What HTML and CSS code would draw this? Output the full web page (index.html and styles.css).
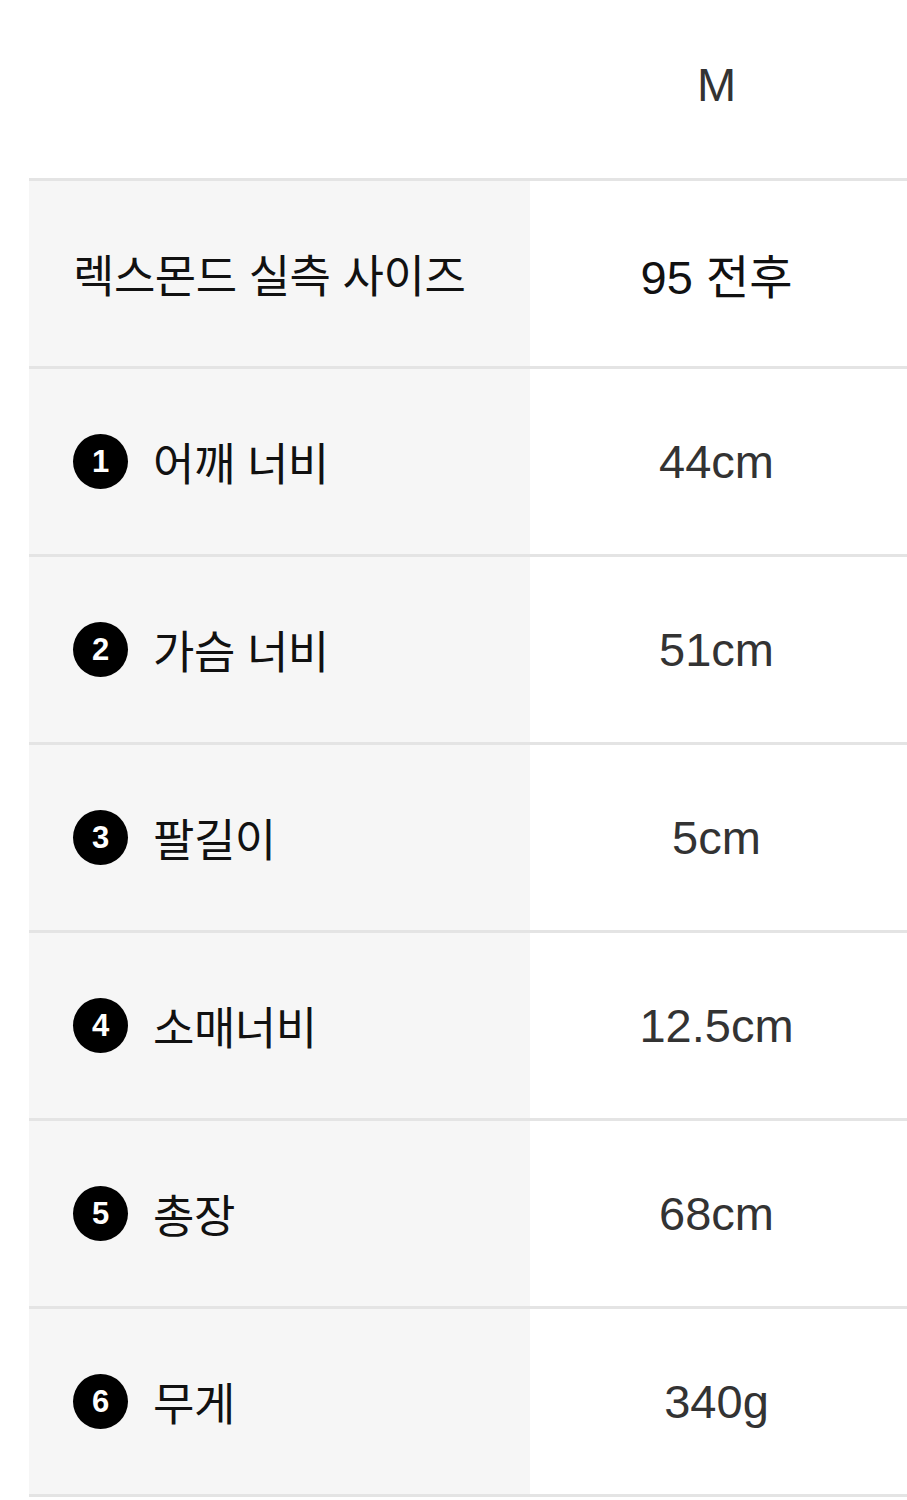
FILE: index.html
```html
<!DOCTYPE html>
<html lang="ko">
<head>
<meta charset="utf-8">
<link rel="stylesheet" href="styles.css">
</head>
<body>
<div class="size-table">
  <div class="row head">
    <div class="cell label blank"></div>
    <div class="cell value head-value">M</div>
  </div>
  <div class="row">
    <div class="cell label"><span class="txt">렉스몬드 실측 사이즈</span></div>
    <div class="cell value dark">95 전후</div>
  </div>
  <div class="row">
    <div class="cell label"><span class="num">1</span><span class="txt">어깨 너비</span></div>
    <div class="cell value">44cm</div>
  </div>
  <div class="row">
    <div class="cell label"><span class="num">2</span><span class="txt">가슴 너비</span></div>
    <div class="cell value">51cm</div>
  </div>
  <div class="row">
    <div class="cell label"><span class="num">3</span><span class="txt">팔길이</span></div>
    <div class="cell value">5cm</div>
  </div>
  <div class="row">
    <div class="cell label"><span class="num">4</span><span class="txt">소매너비</span></div>
    <div class="cell value">12.5cm</div>
  </div>
  <div class="row">
    <div class="cell label"><span class="num">5</span><span class="txt">총장</span></div>
    <div class="cell value">68cm</div>
  </div>
  <div class="row last">
    <div class="cell label"><span class="num">6</span><span class="txt">무게</span></div>
    <div class="cell value">340g</div>
  </div>
</div>
</body>
</html>
```

FILE: styles.css
```css
html, body {
  margin: 0;
  padding: 0;
  background: #ffffff;
}

body {
  font-family: "Liberation Sans", "Noto Sans CJK KR", sans-serif;
  color: #333333;
}

.size-table {
  margin-left: 29px;
  display: flex;
  flex-direction: column;
}

.row {
  display: grid;
  grid-template-columns: 501px 1fr;
  height: 185px;
  border-bottom: 3px solid #e4e4e4;
}

.row.head {
  height: 178px;
}

.cell {
  display: flex;
  align-items: center;
}

.label {
  background: #f6f6f6;
  padding-left: 44px;
  gap: 25px;
}

.label.blank {
  background: #ffffff;
}

.value {
  justify-content: center;
  font-size: 47px;
  color: #333333;
  padding-right: 4px;
}

.head-value {
  padding-bottom: 10px;
}

.value.dark {
  color: #111111;
}

.txt {
  font-family: "Noto Sans CJK KR", sans-serif;
  font-size: 45px;
  color: #111111;
  letter-spacing: -0.5px;
}

.num {
  width: 55px;
  height: 55px;
  border-radius: 50%;
  background: #000000;
  color: #ffffff;
  font-family: "Liberation Sans", sans-serif;
  font-weight: 700;
  font-size: 31px;
  display: flex;
  align-items: center;
  justify-content: center;
  flex-shrink: 0;
}
```
